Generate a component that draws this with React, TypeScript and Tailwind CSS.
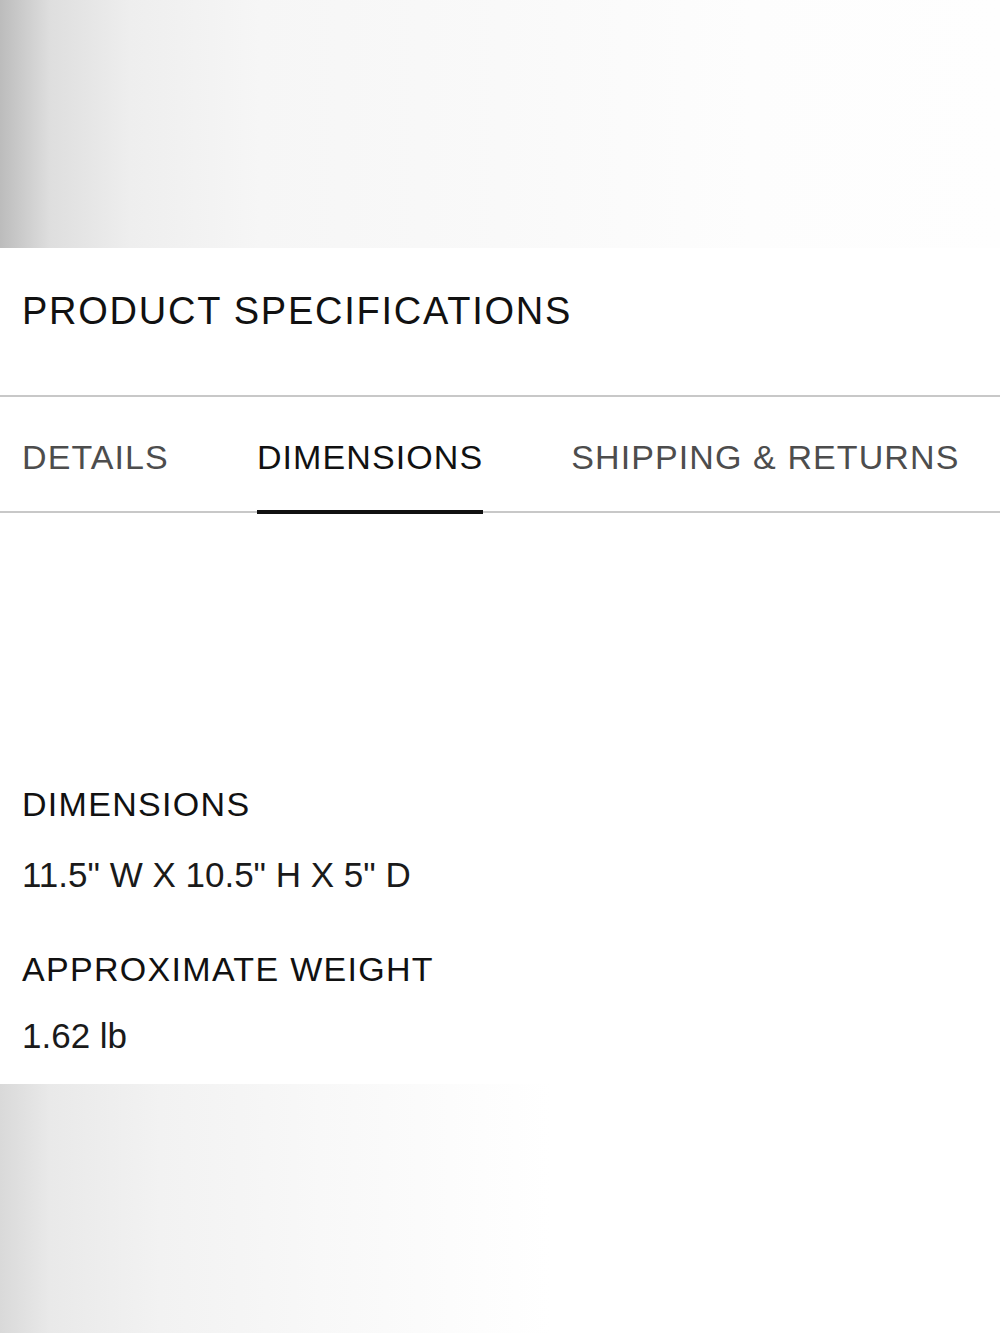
import React from "react";

const tabs = ["DETAILS", "DIMENSIONS", "SHIPPING & RETURNS"];

const specs = [
  { label: "DIMENSIONS", value: '11.5" W X 10.5" H X 5" D' },
  { label: "APPROXIMATE WEIGHT", value: "1.62 lb" },
];

export default function App() {
  const active = "DIMENSIONS";

  return (
    <main className="flex flex-col w-[1000px] h-[1333px] bg-white text-[#111] font-['Liberation_Sans',Arial,sans-serif]">
      <div className="h-[248px] bg-[linear-gradient(90deg,#bcbcbc_0%,#dedede_5%,#eeeeee_13%,#f6f6f6_26%,#f9f9f9_50%,#fdfdfd_75%,#fefefe_100%)]" />

      <section className="flex flex-col bg-white">
        <div className="h-[149px] pt-[44px] px-[22px] border-b-2 border-[#c8c8c8]">
          <h2 className="text-[38px] leading-none tracking-[1.75px] text-[#111]">
            PRODUCT SPECIFICATIONS
          </h2>
        </div>

        <div className="flex gap-[88px] px-[22px] border-b-2 border-[#c8c8c8]">
          {tabs.map((tab) => (
            <button
              key={tab}
              className={`pt-[43px] pb-[36px] -mb-[3px] border-b-4 text-[34px] leading-none tracking-[1.1px] whitespace-nowrap ${
                tab === active
                  ? "border-[#111] text-[#111]"
                  : "border-transparent text-[#4d4d4d]"
              }`}
            >
              {tab}
            </button>
          ))}
        </div>

        <div className="flex flex-col px-[22px] pt-[274px] pb-[31px]">
          {specs.map((spec, i) => (
            <div key={spec.label} className={i > 0 ? "mt-[60px]" : ""}>
              <p className="text-[34px] leading-none tracking-[1.3px] text-[#111]">
                {spec.label}
              </p>
              <p
                className={`text-[35px] leading-none text-[#1a1a1a] ${
                  i === 0 ? "mt-[36px]" : "mt-[32px]"
                }`}
              >
                {spec.value}
              </p>
            </div>
          ))}
        </div>
      </section>

      <div className="flex-1 bg-[linear-gradient(90deg,#d9d9d9_0%,#e9e9e9_5%,#f2f2f2_16%,#f8f8f8_32%,#fcfcfc_45%,#ffffff_55%)]" />
    </main>
  );
}
